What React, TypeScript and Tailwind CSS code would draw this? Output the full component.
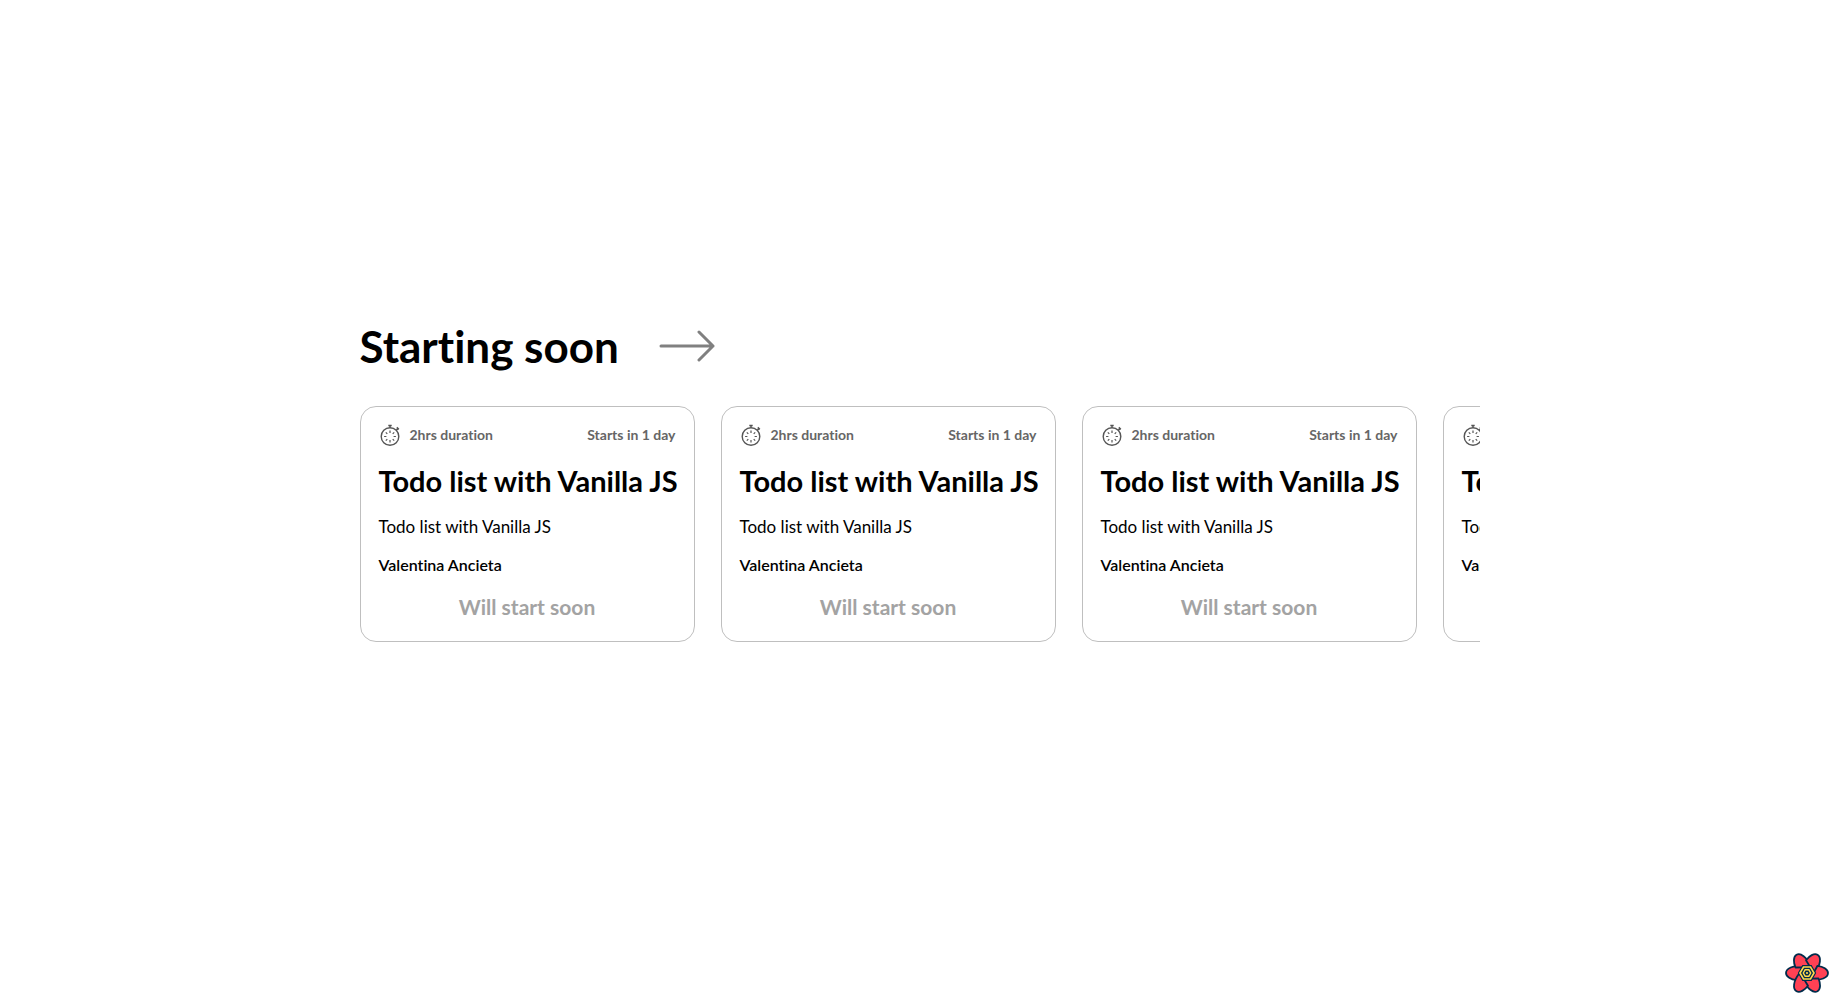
const workshops = [1, 2, 3, 4].map((id) => ({
  id,
  duration: "2hrs duration",
  starts: "Starts in 1 day",
  title: "Todo list with Vanilla JS",
  description: "Todo list with Vanilla JS",
  author: "Valentina Ancieta",
}));

function Stopwatch() {
  return (
    <svg viewBox="0 0 24 24" className="-ml-px size-6 shrink-0" fill="none" stroke="#555" aria-hidden="true">
      <circle cx="12" cy="13.5" r="8.8" strokeWidth="1.4" />
      <path d="M10.3 2.5h3.4M12 2v2.6M18.4 7.1l1.6-1.6M18.8 4.4l2 2" strokeWidth="1.5" />
      <path
        d="M12 7.6v2.3M12 17.1v2.3M6.1 13.5h2.3M15.6 13.5h2.3M7.8 9.3l1.5 1.5M14.7 16.2l1.5 1.5M7.8 17.7l1.5-1.5M14.7 10.8l1.5-1.5"
        strokeWidth="1.2"
      />
    </svg>
  );
}

function Arrow() {
  return (
    <svg
      viewBox="0 0 56 32"
      className="h-8 w-14"
      fill="none"
      stroke="#808080"
      strokeWidth="3"
      strokeLinecap="round"
      strokeLinejoin="round"
      aria-hidden="true"
    >
      <path d="M2 16h52M40 2l14 14L40 30" />
    </svg>
  );
}

function Flower() {
  return (
    <svg viewBox="-22 -22 44 44" className="size-11" aria-hidden="true">
      <g fill="#ff4154" stroke="#002c4b" strokeWidth="1.8" strokeLinejoin="round">
        {[0, 60, 120, 180, 240, 300].map((angle) => (
          <path
            key={angle}
            transform={`rotate(${angle})`}
            d="M-4 -6.5C-14 -8 -21 -4.5 -21 0C-21 3.8 -16 6.6 -10.5 7.2L-6 -1Z"
          />
        ))}
      </g>
      <path d="M-7.5 0L-3.75 -6.5H3.75L7.5 0L3.75 6.5H-3.75Z" fill="#002c4b" stroke="#002c4b" strokeWidth="3" />
      <path d="M-7 0L-3.5 -6H3.5L7 0L3.5 6H-3.5Z" fill="#002c4b" stroke="#ffd94c" strokeWidth="1.6" />
      <path d="M-3.7 0L-1.85 -3.2H1.85L3.7 0L1.85 3.2H-1.85Z" fill="none" stroke="#ffd94c" strokeWidth="1.4" />
      <circle r="1.1" fill="#ffd94c" />
    </svg>
  );
}

export default function App() {
  return (
    <div className="flex min-h-screen flex-col justify-center bg-white font-['Lato',sans-serif] text-black [font-variant-ligatures:none]">
      <main className="mx-auto w-full max-w-[1120px] pb-12">
        <header className="mb-8 flex items-center gap-10">
          <h2 className="text-[44px] leading-[56px] font-bold">Starting soon</h2>
          <button type="button" aria-label="See all workshops">
            <Arrow />
          </button>
        </header>
        <ul className="flex gap-[26px] overflow-hidden">
          {workshops.map((w) => (
            <li
              key={w.id}
              className="flex w-[335px] shrink-0 flex-col rounded-2xl border border-[#bfbfbf] px-[18px] pt-4 pb-[18px]"
            >
              <div className="flex items-center justify-between text-sm font-bold text-[#666]">
                <span className="flex items-center gap-2">
                  <Stopwatch />
                  {w.duration}
                </span>
                <span>{w.starts}</span>
              </div>
              <h3 className="mt-4 text-[29px] leading-9 font-bold whitespace-nowrap">{w.title}</h3>
              <p className="mt-4 text-[17px] leading-6">{w.description}</p>
              <p className="mt-4 text-base leading-5 font-semibold">{w.author}</p>
              <p className="mt-4 text-center text-[21px] leading-8 font-bold text-[#a3a3a3]">Will start soon</p>
            </li>
          ))}
        </ul>
      </main>
      <button type="button" aria-label="Open query tools" className="fixed right-2.5 bottom-3">
        <Flower />
      </button>
    </div>
  );
}
